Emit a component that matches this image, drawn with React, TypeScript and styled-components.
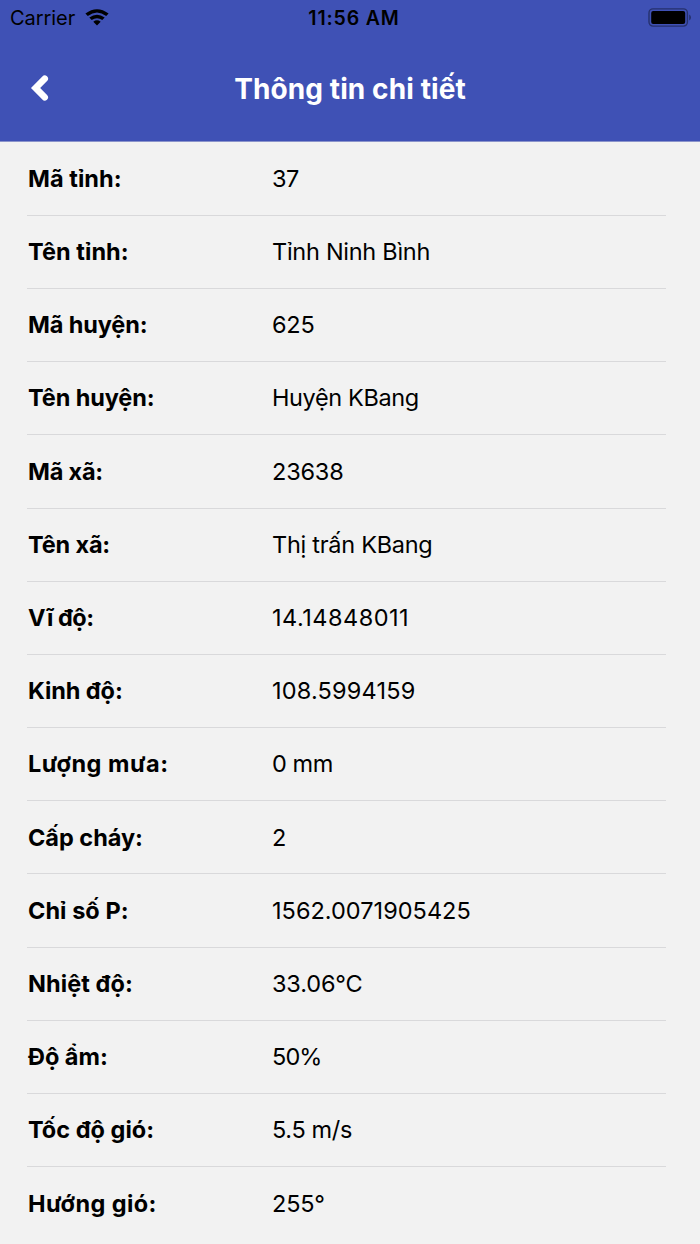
import React from 'react';
import styled, { createGlobalStyle } from 'styled-components';

const Global = createGlobalStyle`
  * { box-sizing: border-box; }
  body { margin: 0; background: #f2f2f2; font-family: Inter, "Liberation Sans", sans-serif; color: #000; }
`;
const Screen = styled.main`
  width: 700px; height: 1244px; overflow: hidden; background: #f2f2f2;
`;
const Header = styled.header`
  height: 142px; background: #3f51b5; border-bottom: 1px solid #8b94cb;
  display: flex; flex-direction: column;
`;
const StatusBar = styled.div`
  height: 36px; padding: 0 8px 0 10px; display: grid; grid-template-columns: 1fr auto 1fr; align-items: center;
`;
const Carrier = styled.div`
  display: flex; align-items: center; gap: 10px; font-size: 20px; line-height: 36px; letter-spacing: -0.05px;
`;
const WifiIcon = styled.svg`
  display: block; margin-bottom: 2px;
`;
const Clock = styled.time`
  font-size: 19.5px; font-weight: 600; line-height: 36px; padding-left: 6px; letter-spacing: 0.85px;
`;
const BatteryIcon = styled.svg`
  justify-self: end; display: block; margin-bottom: 2px;
`;
const NavBar = styled.div`
  flex: 1; display: grid; grid-template-columns: 100px 1fr 100px; align-items: center;
`;
const BackButton = styled.button`
  border: 0; background: none; padding: 0 0 2px 30px; display: flex;
`;
const Title = styled.h1`
  margin: 0; text-align: center; color: #fff; font-size: 28px; font-weight: 700; line-height: 34px;
  letter-spacing: 0.1px; white-space: nowrap;
`;
const List = styled.dl`
  margin: 0; padding: 0.6px 34px 0 27px;
`;
const Row = styled.div`
  height: 73.2px; padding-top: 0.4px; display: grid; grid-template-columns: 245px 1fr; align-items: center;
  border-bottom: 1px solid #d9d9db; font-size: 23.5px; line-height: 30px; white-space: nowrap;
  &:last-child { border-bottom-color: transparent; }
`;
const Label = styled.dt<{ $tracking: number }>`
  font-weight: 700; padding-left: 1px; letter-spacing: ${p => p.$tracking}px;
`;
const Value = styled.dd<{ $tracking: number }>`
  margin: 0; letter-spacing: ${p => p.$tracking}px;
`;

type Field = { label: string; value: string; labelTracking: number; valueTracking: number };

const fields: Field[] = [
  { label: 'Mã tỉnh:', value: '37', labelTracking: 0.05, valueTracking: -0.4 },
  { label: 'Tên tỉnh:', value: 'Tỉnh Ninh Bình', labelTracking: 0.06, valueTracking: -0.27 },
  { label: 'Mã huyện:', value: '625', labelTracking: -0.12, valueTracking: -0.2 },
  { label: 'Tên huyện:', value: 'Huyện KBang', labelTracking: -0.1, valueTracking: -0.38 },
  { label: 'Mã xã:', value: '23638', labelTracking: -0.2, valueTracking: -0.2 },
  { label: 'Tên xã:', value: 'Thị trấn KBang', labelTracking: -0.15, valueTracking: -0.27 },
  { label: 'Vĩ độ:', value: '14.14848011', labelTracking: -0.5, valueTracking: 0.5 },
  { label: 'Kinh độ:', value: '108.5994159', labelTracking: -0.08, valueTracking: 0.18 },
  { label: 'Lượng mưa:', value: '0 mm', labelTracking: 0.52, valueTracking: -0.45 },
  { label: 'Cấp cháy:', value: '2', labelTracking: -0.02, valueTracking: 0 },
  { label: 'Chỉ số P:', value: '1562.0071905425', labelTracking: 0.05, valueTracking: 0.02 },
  { label: 'Nhiệt độ:', value: '33.06°C', labelTracking: 0.08, valueTracking: -0.15 },
  { label: 'Độ ẩm:', value: '50%', labelTracking: -0.03, valueTracking: -0.9 },
  { label: 'Tốc độ gió:', value: '5.5 m/s', labelTracking: 0.02, valueTracking: -0.35 },
  { label: 'Hướng gió:', value: '255°', labelTracking: 0.42, valueTracking: -0.2 },
];

export default function App() {
  return (
    <Screen>
      <Global />
      <Header>
        <StatusBar>
          <Carrier>
            Carrier
            <WifiIcon width="24" height="17" viewBox="0 0 24 17">
              <path d="M.4 4.6Q12-4.2 23.6 4.6L21.2 7.1Q12 0 2.8 7.1ZM4.3 8.6Q12 2.7 19.7 8.6L17.3 11.1Q12 7.2 6.7 11.1ZM8.3 12.7Q12 10 15.7 12.7L12 16.5Z" />
            </WifiIcon>
          </Carrier>
          <Clock>11:56 AM</Clock>
          <BatteryIcon width="44" height="19" viewBox="0 0 44 19">
            <rect x="1" y=".9" width="38.4" height="17.2" rx="4" fill="none" stroke="#26316d" strokeWidth="1.4" />
            <rect x="3.2" y="3" width="34" height="13" rx="2" />
            <path d="M41.2 6.5Q43 7.5 43 9.5T41.2 12.5Z" fill="#26316d" />
          </BatteryIcon>
        </StatusBar>
        <NavBar>
          <BackButton aria-label="Back">
            <svg width="19" height="26" viewBox="0 0 19 26">
              <path d="M14.7 3.7 5.6 13l9.1 9.3" fill="none" stroke="#fff" strokeWidth="6.6" strokeLinejoin="miter" strokeLinecap="round" />
            </svg>
          </BackButton>
          <Title>Thông tin chi tiết</Title>
        </NavBar>
      </Header>
      <List>
        {fields.map(field => (
          <Row key={field.label}>
            <Label $tracking={field.labelTracking}>{field.label}</Label>
            <Value $tracking={field.valueTracking}>{field.value}</Value>
          </Row>
        ))}
      </List>
    </Screen>
  );
}
